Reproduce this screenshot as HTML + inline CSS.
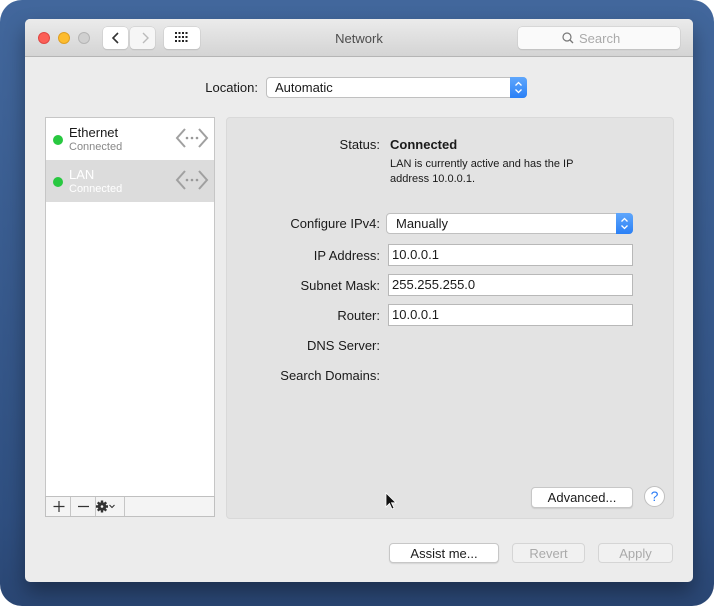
<!DOCTYPE html>
<html><head><meta charset="utf-8"><style>
*{box-sizing:border-box;margin:0;padding:0}
body{width:714px;height:606px;background:#fff;position:relative;overflow:hidden;font-family:"Liberation Sans",sans-serif;font-size:13px;color:#1a1a1a}
.a{position:absolute}
.bg{left:0;top:0;width:714px;height:606px;border-radius:22px;background:linear-gradient(#42679c,#2f4f80 85%,#2a4673)}
.win{left:25px;top:19px;width:668px;height:563px;background:#ececec;border-radius:5px;overflow:hidden;box-shadow:0 10px 20px rgba(0,0,0,.35)}
.tb{left:25px;top:19px;width:668px;height:38px;background:linear-gradient(#ebebeb,#d4d4d4);border-bottom:1px solid #b5b5b5;border-radius:5px 5px 0 0}
.dot{width:12px;height:12px;border-radius:50%}
.btn{background:#fff;border-radius:4px;box-shadow:0 0 0 .5px #c8c8c8,0 1px 1px rgba(0,0,0,.15)}
.lbl{text-align:right;width:160px;left:220px}
.tf{background:#fff;border:1px solid #b8b8b8;height:22px;padding:2px 0 0 3px;font-size:13px}
.pb{border:1px solid #c7c7c7;background:#fff;border-radius:4px;text-align:center;font-size:13px;padding-top:2px;box-shadow:0 1px 1px rgba(0,0,0,.1)}
</style></head><body>
<div class="a bg"></div>
<div class="a win"></div>
<div class="a tb"></div>
<div class="a dot" style="left:38px;top:32px;background:#fc5f57;border:.5px solid #df4744"></div>
<div class="a dot" style="left:58px;top:32px;background:#fdbc2e;border:.5px solid #de9f23"></div>
<div class="a dot" style="left:78px;top:32px;background:#d0d0d0;border:.5px solid #b5b5b5"></div>
<div class="a btn" style="left:103px;top:27px;width:25px;height:22px"></div>
<div class="a btn" style="left:130px;top:27px;width:25px;height:22px;background:#f6f6f6"></div>
<svg class="a" style="left:103px;top:27px" width="52" height="22"><path d="M15 6 L10 11 L15 16" stroke="#333" stroke-width="1.6" fill="none"/><path d="M40 6 L45 11 L40 16" stroke="#bbb" stroke-width="1.4" fill="none"/></svg>
<div class="a btn" style="left:164px;top:27px;width:36px;height:22px"></div>
<svg class="a" style="left:175px;top:32px" width="14" height="12"><g fill="#222"><rect x="0" y="0" width="2" height="2"/><rect x="3.5" y="0" width="2" height="2"/><rect x="7" y="0" width="2" height="2"/><rect x="10.5" y="0" width="2" height="2"/><rect x="0" y="4" width="2" height="2"/><rect x="3.5" y="4" width="2" height="2"/><rect x="7" y="4" width="2" height="2"/><rect x="10.5" y="4" width="2" height="2"/><rect x="0" y="8" width="2" height="2"/><rect x="3.5" y="8" width="2" height="2"/><rect x="7" y="8" width="2" height="2"/><rect x="10.5" y="8" width="2" height="2"/></g></svg>
<div class="a" style="left:300px;top:31px;width:118px;text-align:center;color:#4d4d4d">Network</div>
<div class="a btn" style="left:518px;top:27px;width:162px;height:22px;background:#fafafa"></div>
<svg class="a" style="left:562px;top:32px" width="12" height="12"><circle cx="5" cy="5" r="4" stroke="#777" stroke-width="1.2" fill="none"/><path d="M8 8 L11 11" stroke="#777" stroke-width="1.3"/></svg>
<div class="a" style="left:579px;top:31px;color:#aaa;font-size:13px">Search</div>

<div class="a" style="left:150px;top:80px;width:108px;text-align:right">Location:</div>
<div class="a" style="left:266px;top:77px;width:261px;height:21px;background:#fff;border:1px solid #c0c0c0;border-radius:4px;padding:2px 0 0 8px">Automatic</div>
<div class="a" style="left:510px;top:77px;width:17px;height:21px;background:linear-gradient(#5fa7fc,#2a80f6);border-radius:0 4px 4px 0"></div>
<svg class="a" style="left:510px;top:77px" width="17" height="21"><path d="M5.5 8.5 L8.5 5.5 L11.5 8.5 M5.5 12.5 L8.5 15.5 L11.5 12.5" stroke="#fff" stroke-width="1.3" fill="none"/></svg>

<div class="a" style="left:45px;top:117px;width:170px;height:400px;background:#fff;border:1px solid #c6c6c6"></div>
<div class="a" style="left:46px;top:160px;width:168px;height:42px;background:#dcdcdc"></div>
<div class="a dot" style="left:53px;top:135px;width:10px;height:10px;background:#28c840"></div>
<div class="a dot" style="left:53px;top:177px;width:10px;height:10px;background:#28c840"></div>
<div class="a" style="left:69px;top:125px">Ethernet</div>
<div class="a" style="left:69px;top:141px;font-size:11px;color:#888">Connected</div>
<div class="a" style="left:69px;top:167px;color:#fff">LAN</div>
<div class="a" style="left:69px;top:183px;font-size:11px;color:#fff">Connected</div>
<svg class="a" style="left:175px;top:127px" width="34" height="22"><g stroke="#a0a0a0" stroke-width="2" fill="none"><path d="M10 2 L2 11 L10 20"/><path d="M24 2 L32 11 L24 20"/></g><g fill="#999"><circle cx="12" cy="11" r="1.3"/><circle cx="17" cy="11" r="1.3"/><circle cx="22" cy="11" r="1.3"/></g></svg>
<svg class="a" style="left:175px;top:169px" width="34" height="22"><g stroke="#a0a0a0" stroke-width="2" fill="none"><path d="M10 2 L2 11 L10 20"/><path d="M24 2 L32 11 L24 20"/></g><g fill="#999"><circle cx="12" cy="11" r="1.3"/><circle cx="17" cy="11" r="1.3"/><circle cx="22" cy="11" r="1.3"/></g></svg>
<div class="a" style="left:45px;top:496px;width:170px;height:21px;background:#f4f4f4;border:1px solid #c0c0c0"></div>
<div class="a" style="left:70px;top:497px;width:1px;height:19px;background:#c6c6c6"></div>
<div class="a" style="left:95px;top:497px;width:1px;height:19px;background:#c6c6c6"></div>
<div class="a" style="left:124px;top:497px;width:1px;height:19px;background:#c6c6c6"></div>
<svg class="a" style="left:46px;top:497px" width="80" height="19"><path d="M13 4 V15 M7.5 9.5 H18.5 M32 9.5 H43" stroke="#333" stroke-width="1.2"/><circle cx="56" cy="9.5" r="4.2" fill="#333"/><g stroke="#333" stroke-width="2.4"><path d="M56 3.5 V15.5 M50 9.5 H62 M51.8 5.3 L60.2 13.7 M60.2 5.3 L51.8 13.7"/></g><circle cx="56" cy="9.5" r="1.3" fill="#f4f4f4"/><path d="M63.5 8 L66 10.5 L68.5 8" stroke="#333" stroke-width="1.1" fill="none"/></svg>

<div class="a" style="left:226px;top:117px;width:448px;height:402px;background:#e3e3e3;border:1px solid #d9d9d9;border-radius:4px"></div>
<div class="a lbl" style="top:137px">Status:</div>
<div class="a" style="left:390px;top:137px;font-weight:bold">Connected</div>
<div class="a" style="left:390px;top:157px;font-size:11px;line-height:15px">LAN is currently active and has the IP<br>address 10.0.0.1.</div>
<div class="a lbl" style="top:216px">Configure IPv4:</div>
<div class="a" style="left:386px;top:213px;width:247px;height:21px;background:#fff;border:1px solid #c0c0c0;border-radius:4px;padding:2px 0 0 9px">Manually</div>
<div class="a" style="left:616px;top:213px;width:17px;height:21px;background:linear-gradient(#5fa7fc,#2a80f6);border-radius:0 4px 4px 0"></div>
<svg class="a" style="left:616px;top:213px" width="17" height="21"><path d="M5.5 8.5 L8.5 5.5 L11.5 8.5 M5.5 12.5 L8.5 15.5 L11.5 12.5" stroke="#fff" stroke-width="1.3" fill="none"/></svg>
<div class="a lbl" style="top:248px">IP Address:</div>
<div class="a tf" style="left:388px;top:244px;width:245px">10.0.0.1</div>
<div class="a lbl" style="top:278px">Subnet Mask:</div>
<div class="a tf" style="left:388px;top:274px;width:245px">255.255.255.0</div>
<div class="a lbl" style="top:308px">Router:</div>
<div class="a tf" style="left:388px;top:304px;width:245px">10.0.0.1</div>
<div class="a lbl" style="top:338px">DNS Server:</div>
<div class="a lbl" style="top:368px">Search Domains:</div>

<div class="a pb" style="left:531px;top:487px;width:102px;height:21px">Advanced...</div>
<div class="a" style="left:644px;top:486px;width:21px;height:21px;border-radius:50%;background:#fff;border:1px solid #c0c0c0;color:#2a7cf6;text-align:center;font-size:14px;padding-top:1px">?</div>
<svg class="a" style="left:385px;top:492px" width="12" height="20"><path d="M1 1 V15 L4.5 11.5 L7 17 L9 16 L6.5 10.8 L11 10.8 Z" fill="#111" stroke="#fff" stroke-width=".8"/></svg>

<div class="a pb" style="left:389px;top:543px;width:110px;height:20px">Assist me...</div>
<div class="a pb" style="left:512px;top:543px;width:73px;height:20px;color:#aaa;background:#f1f1f1;border-color:#d5d5d5;box-shadow:none">Revert</div>
<div class="a pb" style="left:598px;top:543px;width:75px;height:20px;color:#aaa;background:#f1f1f1;border-color:#d5d5d5;box-shadow:none">Apply</div>
</body></html>
